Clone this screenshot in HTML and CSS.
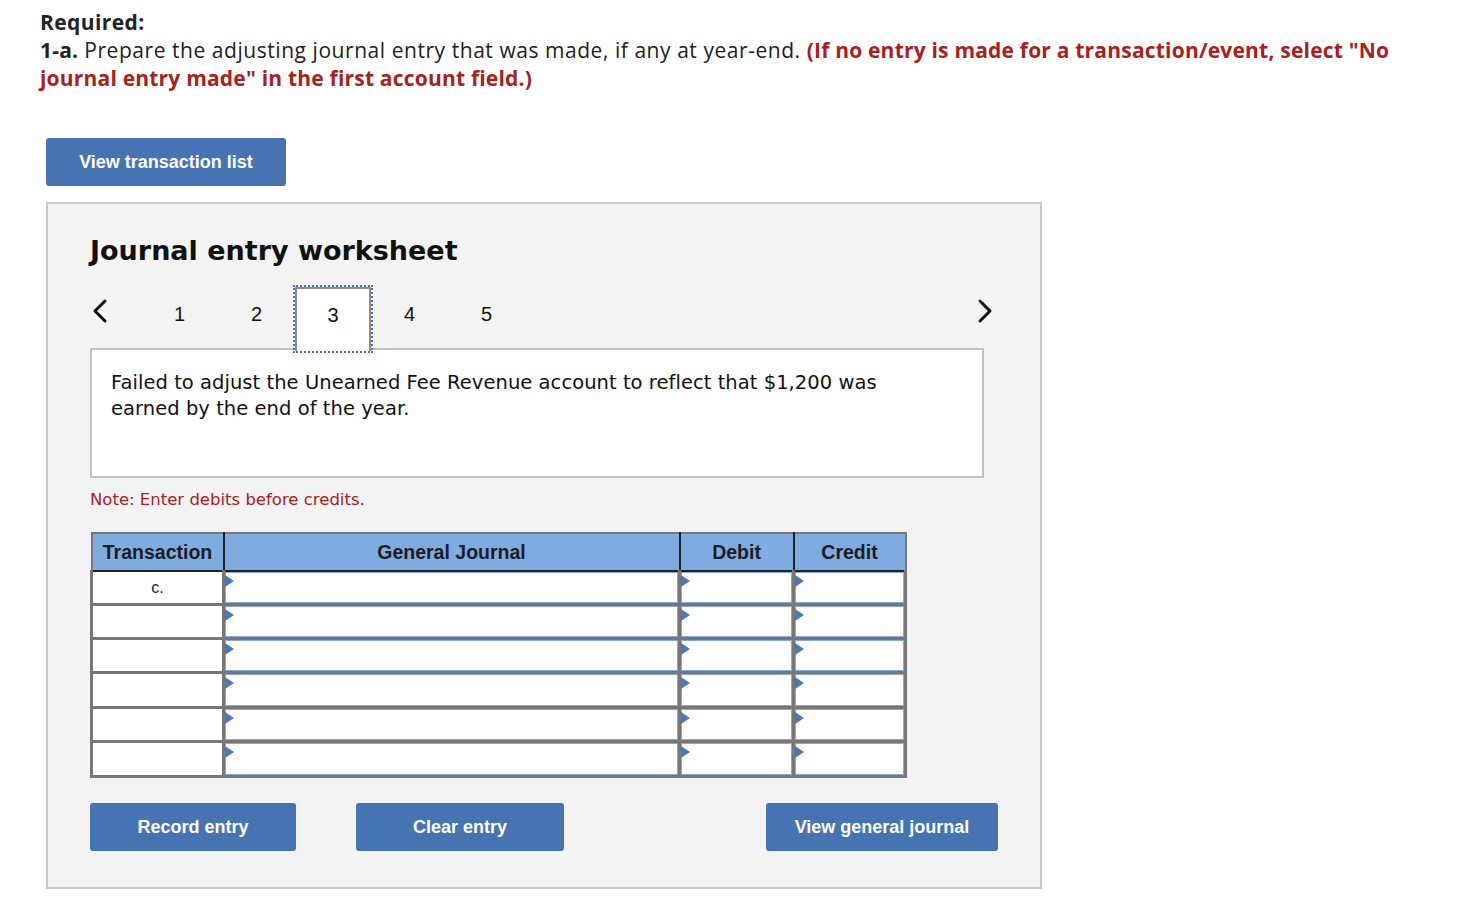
FILE: index.html
```html
<!DOCTYPE html>
<html lang="en">
<head>
<meta charset="utf-8">
<title>Journal entry worksheet</title>
<link rel="stylesheet" href="styles.css">
</head>
<body>
<div class="page">
  <div class="intro">
    <div class="req">Required:</div>
    <p class="task"><b>1-a.</b> Prepare the adjusting journal entry that was made, if any at year-end. <span class="hint">(If no entry is made for a transaction/event, select "No journal entry made" in the first account field.)</span></p>
  </div>
  <button class="btn btn-list">View transaction list</button>

  <section class="panel">
    <h2 class="title">Journal entry worksheet</h2>
    <nav class="tabs">
      <span class="arrow arrow-prev"><svg width="18" height="26" viewBox="0 0 18 26"><polyline points="14,3 4,13 14,23" fill="none" stroke="#111" stroke-width="3" stroke-linecap="round" stroke-linejoin="round"/></svg></span>
      <span class="tab">1</span>
      <span class="tab">2</span>
      <span class="tab tab-active">3</span>
      <span class="tab">4</span>
      <span class="tab">5</span>
      <span class="spacer"></span>
      <span class="arrow arrow-next"><svg width="18" height="26" viewBox="0 0 18 26"><polyline points="4,3 14,13 4,23" fill="none" stroke="#111" stroke-width="3" stroke-linecap="round" stroke-linejoin="round"/></svg></span>
    </nav>
    <div class="desc">Failed to adjust the Unearned Fee Revenue account to reflect that $1,200 was earned by the end of the year.</div>
    <p class="note">Note: Enter debits before credits.</p>

    <table class="journal">
      <thead>
        <tr>
          <th class="c-tr">Transaction</th>
          <th class="c-gj">General Journal</th>
          <th class="c-dr">Debit</th>
          <th class="c-cr">Credit</th>
        </tr>
      </thead>
      <tbody>
        <tr><td class="tr">c.</td><td><div class="field"></div></td><td><div class="field"></div></td><td><div class="field"></div></td></tr>
        <tr><td class="tr"></td><td><div class="field"></div></td><td><div class="field"></div></td><td><div class="field"></div></td></tr>
        <tr><td class="tr"></td><td><div class="field"></div></td><td><div class="field"></div></td><td><div class="field"></div></td></tr>
        <tr><td class="tr"></td><td><div class="field"></div></td><td><div class="field"></div></td><td><div class="field"></div></td></tr>
        <tr><td class="tr"></td><td><div class="field"></div></td><td><div class="field"></div></td><td><div class="field"></div></td></tr>
        <tr><td class="tr"></td><td><div class="field"></div></td><td><div class="field"></div></td><td><div class="field"></div></td></tr>
      </tbody>
    </table>

    <div class="actions">
      <button class="btn btn-record">Record entry</button>
      <button class="btn btn-clear">Clear entry</button>
      <button class="btn btn-view">View general journal</button>
    </div>
  </section>
</div>
</body>
</html>
```
FILE: styles.css
```css
* { box-sizing: border-box; }
html, body { margin: 0; padding: 0; background: #fff; }
body { font-family: "Open Sans", "Liberation Sans", sans-serif; color: #222; }

.page { padding: 8px 0 40px 40px; }

.intro { width: 1370px; font-size: 21px; line-height: 28px; color: #222; }
.req { font-weight: 700; letter-spacing: 0.4px; }
.task { margin: 0; letter-spacing: 0.55px; }
.task b { font-weight: 700; letter-spacing: 0.2px; }
.hint { color: #a8211c; font-weight: 700; letter-spacing: 0.2px; }

.btn {
  display: inline-flex; align-items: center; justify-content: center;
  height: 48px; border: none; border-radius: 3px;
  background: #4674b3; color: #fff;
  font-family: "Liberation Sans", Arial, sans-serif; font-weight: 700; font-size: 18px;
  padding: 0; cursor: pointer;
}
.btn-list { width: 240px; margin: 46px 0 0 6px; }

.panel {
  margin: 16px 0 0 6px; width: 996px;
  background: #f3f3f3; border: 2px solid #c8c8c8;
  padding: 29px 42px 36px 42px;
}
.title {
  margin: 0; font-family: "DejaVu Sans", Verdana, sans-serif; font-weight: 700;
  font-size: 27px; line-height: 36px; color: #111;
}

.tabs { display: flex; align-items: stretch; height: 64px; margin-top: 18px; margin-bottom: -3px; position: relative; z-index: 2; }
.arrow { display: flex; align-items: center; }
.arrow-prev { width: 51px; padding-left: 1px; padding-bottom: 16px; }
.arrow-next { width: 26px; justify-content: center; padding-bottom: 16px; }
.spacer { flex: 1; }
.tab {
  width: 77px; display: flex; align-items: center; justify-content: center;
  font-family: "Liberation Sans", Arial, sans-serif; font-size: 20px; color: #111;
  padding-bottom: 10px;
}
.tab-active {
  width: 76px;
  background: #fff; border: 2px solid #8a8a8a; border-bottom: none;
  outline: 2px dotted #4a76b0; outline-offset: 0;
}

.desc {
  position: relative; z-index: 1;
  width: 894px; height: 130px; background: #fff; border: 2px solid #c2c2c2;
  padding: 20px 60px 20px 19px; font-family: "DejaVu Sans", Verdana, sans-serif;
  font-size: 19.5px; line-height: 26px; color: #111; letter-spacing: 0.05px;
}
.note {
  margin: 12px 0 0 0; font-family: "DejaVu Sans", Verdana, sans-serif;
  font-size: 16.5px; line-height: 20px; color: #a8211c;
}

.journal {
  margin-top: 22px; border-collapse: collapse; width: 812px;
  border: 2px solid #777; table-layout: fixed;
}
.journal th {
  background: #80abe0; height: 38px; border: 2px solid #222; border-top-color: #777;
  font-family: "Liberation Sans", Arial, sans-serif; font-weight: 700; font-size: 19.5px; color: #1d1d1d;
  padding: 0; text-align: center;
}
.journal th:first-child { border-left-color: #777; }
.journal th:last-child { border-right-color: #777; }
.c-tr { width: 132px; }
.c-gj { width: 456px; }
.c-dr { width: 114px; }
.c-cr { width: 112px; }
.journal td {
  border: 3px solid #777; border-top-width: 2px; background: #fff; padding: 0; height: 32px;
}
.journal tbody tr:first-child td { border-top: none; }
.journal tbody tr:nth-child(4) td,
.journal tbody tr:nth-child(6) td { height: 33px; }
.journal td.tr {
  text-align: center; font-family: "Liberation Sans", Arial, sans-serif; font-size: 16px; color: #222;
  background: #fff;
}
.journal td:not(.tr) { background: #6d7f99; border-color: #777; }
.field {
  position: relative; height: 31px; background: #fff; border: 1px solid #86a9dc;
  margin: 0;
}
.journal tbody tr:nth-child(4) .field,
.journal tbody tr:nth-child(6) .field { height: 32px; }
.field::before {
  content: ""; position: absolute; left: -1px; top: 2px;
  border-style: solid; border-width: 6px 0 6px 9px;
  border-color: transparent transparent transparent #4a78b8;
}

.actions { display: flex; margin-top: 25px; }
.btn-record { width: 206px; }
.btn-clear { width: 208px; margin-left: 60px; }
.btn-view { width: 232px; margin-left: auto; }
```
